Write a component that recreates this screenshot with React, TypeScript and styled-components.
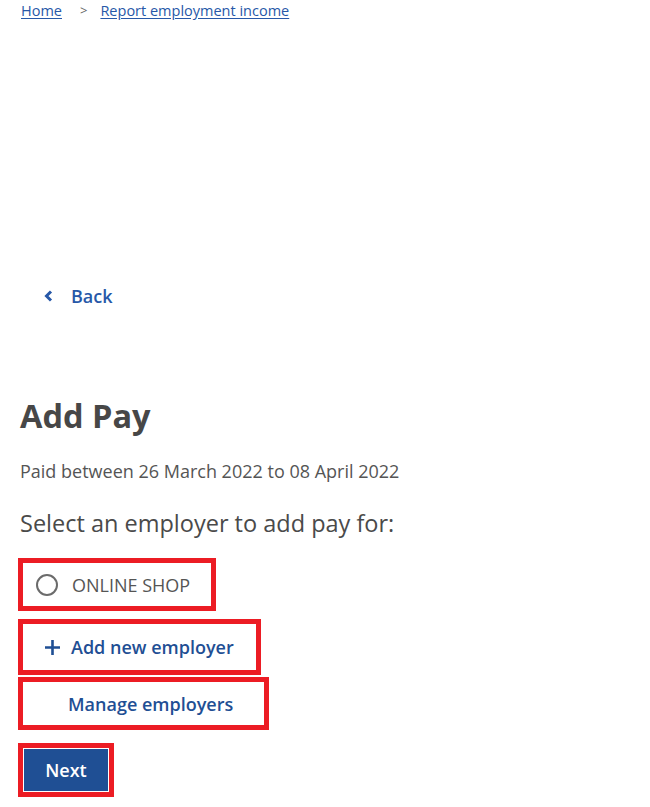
import React from 'react';
import styled, { createGlobalStyle } from 'styled-components'

const linkBlue = '#2758a8'
const btnBlue = '#1f4f94'
const textGrey = '#4a4a4a'
const markRed = '#ec1c24'

const GlobalStyle = createGlobalStyle`
  body {
    margin: 0;
    background: #ffffff;
    font-family: "Open Sans", "Noto Sans", sans-serif;
    color: ${textGrey};
  }
`

const Page = styled.div`
  width: 650px;
  height: 807px;
  padding: 0 0 0 20px;
  box-sizing: border-box;
  overflow: hidden;
`

const Crumbs = styled.nav`
  display: flex;
  align-items: center;
  height: 20px;
  font-size: 14.5px;
`

const CrumbLink = styled.a`
  color: ${linkBlue};
  text-decoration: underline;
  text-underline-offset: 2px;
  margin-left: 1px;
`

const CrumbSep = styled.span`
  color: #666;
  font-size: 13px;
  margin: 0 12px 0 18px;
`

const BackLink = styled.a`
  display: flex;
  align-items: center;
  gap: 18px;
  margin: 264px 0 0 24px;
  height: 24px;
  color: ${linkBlue};
  text-decoration: none;
  font-size: 18px;
  font-weight: 600;
`

const Title = styled.h1`
  margin: 88px 0 0;
  font-size: 32.5px;
  line-height: 40px;
  font-weight: 700;
  color: #474747;
`

const Period = styled.p`
  margin: 22px 0 0;
  font-size: 18px;
  line-height: 26px;
  color: #555;
`

const Prompt = styled.p`
  margin: 23px 0 0;
  font-size: 23.5px;
  line-height: 32px;
  color: ${textGrey};
`

const Options = styled.div`
  display: flex;
  flex-direction: column;
  align-items: flex-start;
  margin: 19px 0 0 -2px;
`

const Mark = styled.div<{ $gap?: number }>`
  border: 5px solid ${markRed};
  margin-bottom: ${({ $gap }) => $gap ?? 0}px;
`

const Radio = styled.label`
  display: flex;
  align-items: center;
  gap: 14px;
  width: 188px;
  height: 43px;
  padding-left: 13px;
  box-sizing: border-box;
  font-size: 18px;
  color: #555;
`

const Circle = styled.span`
  width: 18px;
  height: 18px;
  border: 2px solid #6b6b6b;
  border-radius: 50%;
`

const GhostButton = styled.button<{ $w: number; $h: number; $pl: number }>`
  display: flex;
  align-items: center;
  gap: 11px;
  width: ${({ $w }) => $w}px;
  height: ${({ $h }) => $h}px;
  padding: 0 0 0 ${({ $pl }) => $pl}px;
  border: none;
  background: #fff;
  font-family: inherit;
  font-size: 18px;
  font-weight: 600;
  color: ${btnBlue};
`

const NextButton = styled.button`
  display: block;
  width: 84px;
  height: 42px;
  margin: 1px;
  border: none;
  background: ${btnBlue};
  color: #fff;
  font-family: inherit;
  font-size: 18px;
  font-weight: 600;
`

const Chevron = () => (
  <svg width="9" height="12" viewBox="0 0 9 12">
    <path d="M7 1.5 L2.5 6 L7 10.5" fill="none" stroke={linkBlue} strokeWidth="3" />
  </svg>
)

const Plus = () => (
  <svg width="15" height="15" viewBox="0 0 15 15">
    <path d="M7.5 0 V15 M0 7.5 H15" stroke={btnBlue} strokeWidth="2.6" />
  </svg>
)

export default function App() {
  return (
    <Page>
      <GlobalStyle />
      <Crumbs>
        <CrumbLink href="#">Home</CrumbLink>
        <CrumbSep>&gt;</CrumbSep>
        <CrumbLink href="#">Report employment income</CrumbLink>
      </Crumbs>
      <BackLink href="#"><Chevron />Back</BackLink>
      <Title>Add Pay</Title>
      <Period>Paid between 26 March 2022 to 08 April 2022</Period>
      <Prompt>Select an employer to add pay for:</Prompt>
      <Options>
        <Mark $gap={8}>
          <Radio><Circle />ONLINE SHOP</Radio>
        </Mark>
        <Mark $gap={2}>
          <GhostButton $w={233} $h={46} $pl={22}><Plus />Add new employer</GhostButton>
        </Mark>
        <Mark $gap={13}>
          <GhostButton $w={241} $h={43} $pl={45}>Manage employers</GhostButton>
        </Mark>
        <Mark>
          <NextButton>Next</NextButton>
        </Mark>
      </Options>
    </Page>
  )
}
